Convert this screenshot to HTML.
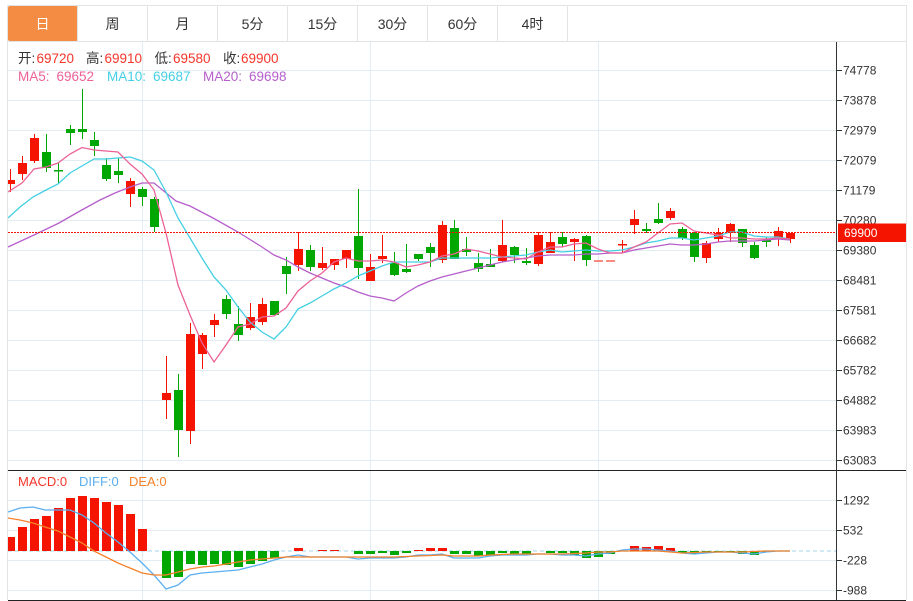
<!DOCTYPE html>
<html><head><meta charset="utf-8"><style>
html,body{margin:0;padding:0;background:#fff;width:913px;height:601px;overflow:hidden}
svg{display:block}
text{font-family:"Liberation Sans","Noto Sans CJK SC",sans-serif}
</style></head><body>
<svg width="913" height="601" viewBox="0 0 913 601" xmlns="http://www.w3.org/2000/svg">
<defs><clipPath id="c"><rect x="8" y="42" width="828" height="558"/></clipPath></defs>
<rect width="913" height="601" fill="#fff"/>
<!-- tabs -->
<rect x="8" y="6" width="70" height="35" rx="2" fill="#f48c43"/>
<path d="M7.500 5.500H906.500V600M7.500 5.500V600M7.500 41.500H906.500M147.500 6V41M217.500 6V41M287.500 6V41M357.500 6V41M427.500 6V41M497.500 6V41M567.500 6V41M77.500 6V41" fill="none" stroke="#e1e3e4" stroke-width="1"/>
<g font-size="14" text-anchor="middle" fill="#333">
<text x="42.500" y="29" fill="#fff">日</text>
<text x="112.500" y="29">周</text>
<text x="182.500" y="29">月</text>
<text x="252.500" y="29">5分</text>
<text x="322.500" y="29">15分</text>
<text x="392.500" y="29">30分</text>
<text x="462.500" y="29">60分</text>
<text x="532.500" y="29">4时</text>
</g>
<!-- grid -->
<path d="M8 70.500H836M8 100.500H836M8 130.500H836M8 160.500H836M8 190.500H836M8 220.500H836M8 250.500H836M8 280.500H836M8 310.500H836M8 340.500H836M8 370.500H836M8 400.500H836M8 430.500H836M8 460.500H836M8 500.500H836M8 530.500H836M8 560.500H836M8 590.500H836M142.500 42V600M370.500 42V600M598.500 42V600" fill="none" stroke="#e1ecf3" stroke-width="1"/>
<g clip-path="url(#c)">
<!-- green candles -->
<path d="M46.500 134V172M58.500 163V183M70.500 125V145M82.500 89V139M94.500 132V156M106.500 158V181M118.500 158V183M142.500 187V206M154.500 197V232M178.500 374V457M226.500 295V319M238.500 306V341M274.500 301V315M286.500 257V294M310.500 245V271M358.500 189V279M394.500 252V276M406.500 244V273M418.500 254V261M430.500 243V267M454.500 220V259M466.500 237V256M478.500 253V272M490.500 249V267M514.500 246V263M526.500 248V265M562.500 232V247M586.500 235V266M646.500 223V233M658.500 203V224M682.500 227V240M694.500 232V262M742.500 229V247M754.500 242V259M766.500 237V247" stroke="#00a700" stroke-width="1" fill="none"/>
<path d="M42 152h9v16h-9zM54 170h9v1.500h-9zM66 129h9v4h-9zM78 129h9v3h-9zM90 140h9v6h-9zM102 165h9v14h-9zM114 171h9v4h-9zM138 189h9v8h-9zM150 199h9v28h-9zM174 390h9v40h-9zM222 299h9v15h-9zM234 324h9v11h-9zM270 301h9v14h-9zM282 266h9v8h-9zM306 250h9v17h-9zM354 236h9v32h-9zM390 263h9v12h-9zM402 269h9v3h-9zM414 254h9v5h-9zM426 247h9v6h-9zM450 228h9v31h-9zM462 249h9v3h-9zM474 263h9v6h-9zM486 264h9v3h-9zM510 247h9v8h-9zM522 261h9v2h-9zM558 237h9v7h-9zM582 236h9v24h-9zM642 229h9v2h-9zM654 219h9v4h-9zM678 229h9v9h-9zM690 233h9v24h-9zM738 229h9v14h-9zM750 245h9v13h-9zM762 240h9v2h-9z" fill="#00a700"/>
<!-- red candles -->
<path d="M10.500 169V192M22.500 156V180M34.500 134V163M130.500 178V207M166.500 356V419M190.500 323V444M202.500 333V369M214.500 314V337M250.500 303V330M262.500 298V325M298.500 232V271M322.500 247V270M334.500 259V270M346.500 250V268M370.500 254V281M382.500 235V263M442.500 221V263M502.500 220V262M538.500 232V266M550.500 232V253M574.500 238V261M622.500 240V253M634.500 210V234M670.500 208V220M706.500 241V263M718.500 228V242M730.500 223V242M778.500 227V246M790.500 233V243" stroke="#f41400" stroke-width="1" fill="none"/>
<path d="M6 180h9v4h-9zM18 163h9v11h-9zM30 138h9v23h-9zM126 181h9v13h-9zM162 393h9v7h-9zM186 334h9v97h-9zM198 335h9v19h-9zM210 320h9v5h-9zM246 317h9v11h-9zM258 304h9v18h-9zM294 249h9v16h-9zM318 263h9v5h-9zM330 259h9v6h-9zM342 250h9v9h-9zM366 267h9v14h-9zM378 256h9v3h-9zM438 225h9v35h-9zM498 245h9v16h-9zM534 235h9v29h-9zM546 242h9v11h-9zM570 239h9v3h-9zM594 260.500h9v1h-9zM606 260.500h9v1h-9zM618 244h9v1.500h-9zM630 219h9v6h-9zM666 211h9v7h-9zM702 243h9v15h-9zM714 233h9v6h-9zM726 224h9v9h-9zM774 231h9v7h-9zM786 233h9v6h-9z" fill="#f41400"/>
<!-- MA20 -->
<polyline fill="none" stroke="#b65fcb" stroke-width="1.300" points="8,247 34,235 59,223 80,211 100,200 115,193 130,187 142,183 154,183 176,201 190,206 213,218 238,232 262,247 274,255 286,260 298,267 310,273 322,278 334,283 346,287 358,292 370,296 382,298 394,301 406,293 418,286 430,281 442,277 454,274 466,271 478,268 490,265 502,262 514,260 526,258 538,256 550,255 562,255 574,255 586,254 598,254 610,253 622,253 634,250 646,248 658,246 670,244 682,245 694,245 706,244 718,242 730,241 742,241 754,241 766,240 778,239 790,240"/>
<!-- MA10 -->
<polyline fill="none" stroke="#44cfe4" stroke-width="1.300" points="8,218 20,207 33,197 46,190 58,184 70,173 82,166 94,159 106,159 118,158 130,157 142,161 154,170 166,192 178,218 190,238 202,258 214,277 226,290 238,307 250,322 262,332 274,339 286,327 298,309 310,303 322,296 334,289 346,283 358,276 370,271 382,266 394,262 406,262 418,262 430,262 442,258 454,258 466,258 478,258 490,258 502,257 514,256 526,255 538,252 550,250 562,252 574,251 586,250 598,251 610,251 622,250 634,247 646,243 658,241 670,238 682,238 694,240 706,238 718,236 730,232 742,232 754,236 766,237 778,237 790,239"/>
<!-- MA5 -->
<polyline fill="none" stroke="#ec6297" stroke-width="1.300" points="8,192 22,183 34,169 46,167 58,163 70,154 82,147.500 94,150 106,151 118,152 130,164 142,174 154,190 166,233 178,285 190,315 202,343 214,362 226,345 238,327 250,324 262,317 274,316 286,308 298,291 310,281 322,273 334,262 346,258 358,261 370,261 382,260 394,262 406,267 418,265 430,262 442,256 454,254 466,249 478,251 490,254 502,257 514,258 526,259 538,252 550,247 562,247 574,244 586,243 598,249 610,253 622,253 634,247 646,242 658,233 670,224 682,223 694,231 706,233 718,235 730,238 742,238 754,239 766,239 778,238 790,239"/>
<!-- current price line -->
<path d="M8 232.500H836" stroke="#f41400" stroke-width="1" stroke-dasharray="2 1" fill="none"/>
<!-- MACD zero line -->
<path d="M8 551H836" stroke="#bfe4f0" stroke-width="1.500" stroke-dasharray="4 3" fill="none"/>
<!-- MACD red -->
<path d="M6 537h9v14h-9zM18 527h9v24h-9zM30 519h9v32h-9zM42 516h9v35h-9zM54 508h9v43h-9zM66 498h9v53h-9zM78 496h9v55h-9zM90 498h9v53h-9zM102 502h9v49h-9zM114 505h9v46h-9zM126 514h9v37h-9zM138 529h9v22h-9zM294 548h9v3h-9zM318 550h9v1h-9zM330 550h9v1h-9zM414 550h9v1h-9zM426 548h9v3h-9zM438 548h9v3h-9zM630 546h9v5h-9zM642 547h9v4h-9zM654 546h9v5h-9zM666 548h9v3h-9z" fill="#f41400"/>
<!-- MACD green -->
<path d="M162 551h9v27h-9zM174 551h9v26h-9zM186 551h9v13h-9zM198 551h9v14h-9zM210 551h9v13h-9zM222 551h9v14h-9zM234 551h9v16h-9zM246 551h9v13h-9zM258 551h9v10h-9zM270 551h9v7h-9zM354 551h9v3h-9zM366 551h9v3h-9zM378 551h9v2h-9zM390 551h9v4h-9zM402 551h9v2h-9zM450 551h9v3h-9zM462 551h9v3h-9zM474 551h9v5h-9zM486 551h9v4h-9zM498 551h9v2h-9zM510 551h9v3h-9zM522 551h9v3h-9zM546 551h9v2h-9zM558 551h9v2h-9zM570 551h9v4h-9zM582 551h9v7h-9zM594 551h9v6h-9zM606 551h9v3h-9zM678 551h9v2h-9zM690 551h9v3h-9zM702 551h9v1h-9zM714 551h9v1h-9zM726 551h9v1h-9zM738 551h9v3h-9zM750 551h9v4h-9zM762 551h9v1h-9z" fill="#00a700"/>
<!-- DIFF -->
<polyline fill="none" stroke="#5aaef2" stroke-width="1.300" points="8,512 20,508 33,507 45,510 58,510 70,510 82,515 94,523 106,533 118,542 130,552 142,563 154,575 166,589 178,585 190,575 202,573 214,572 226,571 238,570 250,567 262,564 274,560 286,557 298,555 310,557 322,557 334,557 346,557 358,559 370,558 382,558 394,558 406,557 418,555 430,555 442,554 454,558 466,558 478,558 490,556 502,555 514,555 526,555 538,554 550,554 562,555 574,555 586,556 598,554 610,553 622,550 634,549 646,549 658,550 670,551 682,553 694,554 706,553 718,552 730,552 742,553 754,554 766,552 778,551 790,551"/>
<!-- DEA -->
<polyline fill="none" stroke="#f5822a" stroke-width="1.300" points="8,518 20,520 33,523 45,527 58,531 70,537 82,543 94,551 106,557 118,563 130,568 142,573 154,575 166,575 178,572 190,569 202,567 214,566 226,564 238,562 250,560 262,559 274,558 286,557 298,557 322,557 346,557 370,557 394,557 418,556 442,555 454,556 478,556 490,555 514,554 538,554 562,554 586,553 598,552 610,552 622,551 634,551 658,551 670,552 682,553 706,552 742,552 766,551 790,551"/>
</g>
<!-- separators and axis -->
<path d="M8 470.500H906M8 600.500H906" stroke="#222" stroke-width="1" fill="none"/>
<path d="M836.500 42V600" stroke="#333" stroke-width="1" fill="none"/>
<path d="M837 70.500h5M837 100.500h5M837 130.500h5M837 160.500h5M837 190.500h5M837 220.500h5M837 250.500h5M837 280.500h5M837 310.500h5M837 340.500h5M837 370.500h5M837 400.500h5M837 430.500h5M837 460.500h5M837 500.500h5M837 530.500h5M837 560.500h5M837 590.500h5" stroke="#333" stroke-width="1" fill="none"/>
<g font-size="12" fill="#333">
<text x="843" y="74.500">74778</text>
<text x="843" y="104.500">73878</text>
<text x="843" y="134.500">72979</text>
<text x="843" y="164.500">72079</text>
<text x="843" y="194.500">71179</text>
<text x="843" y="224.500">70280</text>
<text x="843" y="254.500">69380</text>
<text x="843" y="284.500">68481</text>
<text x="843" y="314.500">67581</text>
<text x="843" y="344.500">66682</text>
<text x="843" y="374.500">65782</text>
<text x="843" y="404.500">64882</text>
<text x="843" y="434.500">63983</text>
<text x="843" y="464.500">63083</text>
<text x="843" y="504.500">1292</text>
<text x="843" y="534.500">532</text>
<text x="843" y="564.500">-228</text>
<text x="843" y="594.500">-988</text>
</g>
<rect x="838" y="223.500" width="68" height="18.500" fill="#f41400"/>
<text x="844" y="237" font-size="12" fill="#fff">69900</text>
<!-- legends -->
<g font-size="13.500">
<text x="18" y="63" fill="#333">开:</text><text x="36.500" y="63" fill="#f5352a">69720</text>
<text x="86" y="63" fill="#333">高:</text><text x="104.500" y="63" fill="#f5352a">69910</text>
<text x="154.500" y="63" fill="#333">低:</text><text x="173" y="63" fill="#f5352a">69580</text>
<text x="223" y="63" fill="#333">收:</text><text x="241" y="63" fill="#f5352a">69900</text>
<text x="18" y="81" fill="#ec6297">MA5:</text><text x="56.500" y="81" fill="#ec6297">69652</text>
<text x="107" y="81" fill="#44cfe4">MA10:</text><text x="153" y="81" fill="#44cfe4">69687</text>
<text x="203" y="81" fill="#b65fcb">MA20:</text><text x="249" y="81" fill="#b65fcb">69698</text>
</g>
<g font-size="13">
<text x="18" y="486" fill="#f5352a">MACD:0</text>
<text x="79" y="486" fill="#5aaef2">DIFF:0</text>
<text x="129" y="486" fill="#f5822a">DEA:0</text>
</g>
</svg>
</body></html>
